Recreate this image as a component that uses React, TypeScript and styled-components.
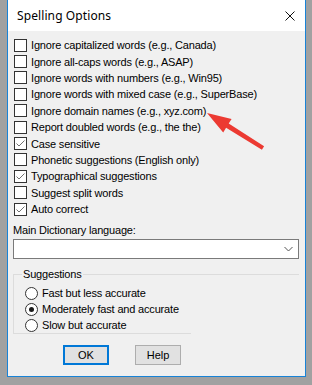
import React from 'react';
import styled, { createGlobalStyle } from 'styled-components';

const GlobalStyle = createGlobalStyle`
  html, body {
    margin: 0;
    padding: 0;
  }
  body {
    background: #a1a1a1;
    overflow: hidden;
  }
`;

const Screen = styled.div`
  position: relative;
  width: 312px;
  height: 385px;
  padding-left: 7px;
  box-sizing: border-box;
  background: #a1a1a1;
`;

const Dialog = styled.div`
  width: 299px;
  height: 377px;
  box-sizing: border-box;
  border: 1px solid #1883d7;
  border-top: none;
  background: #f0f0f0;
  display: flex;
  flex-direction: column;
  font-family: 'Liberation Sans', Arial, sans-serif;
  font-size: 11px;
  letter-spacing: -0.18px;
  color: #000;
`;

const TitleBar = styled.div`
  height: 31px;
  flex: none;
  background: #fff;
  display: flex;
  align-items: center;
  justify-content: space-between;
  padding: 0 10px 0 9px;
  font-family: 'Noto Sans', sans-serif;
  font-size: 12px;
  letter-spacing: 0.1px;
`;

const Body = styled.div`
  display: flex;
  flex-direction: column;
  padding: 6px 6px 0 5px;
`;

const OptionList = styled.div`
  display: flex;
  flex-direction: column;
  padding-left: 1px;
`;

const Row = styled.label<{ $h: number }>`
  display: flex;
  align-items: center;
  gap: 4px;
  height: ${(p) => p.$h}px;
  white-space: nowrap;
`;

const Box = styled.span`
  width: 13px;
  height: 13px;
  box-sizing: border-box;
  border: 1px solid #333;
  background: #fff;
  flex: none;
  display: flex;
  align-items: center;
  justify-content: center;
`;

const Radio = styled.span<{ $on?: boolean }>`
  width: 13px;
  height: 13px;
  box-sizing: border-box;
  border: 1px solid #333;
  border-radius: 50%;
  background: #fff;
  flex: none;
  display: flex;
  align-items: center;
  justify-content: center;
  &::after {
    content: '';
    width: 5px;
    height: 5px;
    border-radius: 50%;
    background: ${(p) => (p.$on ? '#1a1a1a' : 'transparent')};
  }
`;

const FieldLabel = styled.div`
  margin-top: 7px;
  line-height: 13px;
`;

const Select = styled.div`
  margin-top: 2px;
  width: 286px;
  height: 20px;
  box-sizing: border-box;
  border: 1px solid #7a7a7a;
  background: #fff;
  display: flex;
  align-items: center;
  justify-content: flex-end;
  padding-right: 5px;
`;

const Group = styled.fieldset`
  margin: 9px 0 0 0;
  padding: 0;
  width: 286px;
  box-sizing: border-box;
  border: 1px solid #dcdcdc;
  border-right: none;
  border-bottom: none;
  min-width: 0;
`;

const Legend = styled.legend`
  margin-left: 8px;
  padding: 0 1px;
  line-height: 13px;
`;

const RadioList = styled.div`
  display: flex;
  flex-direction: column;
  padding: 4px 0 0 11px;
`;

const GroupFoot = styled.div`
  width: 178px;
  height: 1px;
  background: #dcdcdc;
`;

const Buttons = styled.div`
  display: flex;
  gap: 26px;
  margin: 11px 0 0 50px;
`;

const Button = styled.button<{ $primary?: boolean }>`
  width: 46px;
  height: 20px;
  box-sizing: border-box;
  padding: 0;
  background: #e1e1e1;
  border: ${(p) => (p.$primary ? '2px solid #0078d7' : '1px solid #adadad')};
  font-family: 'Liberation Sans', Arial, sans-serif;
  font-size: 11px;
  color: #000;
`;

const Overlay = styled.svg`
  position: absolute;
  left: 0;
  top: 0;
  pointer-events: none;
`;

const options: [string, boolean][] = [
  ['Ignore capitalized words (e.g., Canada)', false],
  ['Ignore all-caps words (e.g., ASAP)', false],
  ['Ignore words with numbers (e.g., Win95)', false],
  ['Ignore words with mixed case (e.g., SuperBase)', false],
  ['Ignore domain names (e.g., xyz.com)', false],
  ['Report doubled words (e.g., the the)', false],
  ['Case sensitive', true],
  ['Phonetic suggestions (English only)', false],
  ['Typographical suggestions', true],
  ['Suggest split words', false],
  ['Auto correct', true],
];

const speeds = [
  'Fast but less accurate',
  'Moderately fast and accurate',
  'Slow but accurate',
];

const Check = () => (
  <svg width="11" height="11" viewBox="0 0 11 11">
    <path d="M1.5 5.5 L4 8 L9.5 2.5" fill="none" stroke="#707070" strokeWidth="1" />
  </svg>
);

const App = () => {
  return (
    <Screen>
      <GlobalStyle />
      <Dialog>
        <TitleBar>
          <span>Spelling Options</span>
          <svg width="10" height="10" viewBox="0 0 10 10">
            <path d="M0.5 0.5 L9.5 9.5 M9.5 0.5 L0.5 9.5" stroke="#111" strokeWidth="1" />
          </svg>
        </TitleBar>
        <Body>
          <OptionList>
            {options.map(([text, on]) => (
              <Row key={text} $h={16.4}>
                <Box>{on && <Check />}</Box>
                {text}
              </Row>
            ))}
          </OptionList>
          <FieldLabel>Main Dictionary language:</FieldLabel>
          <Select>
            <svg width="9" height="6" viewBox="0 0 9 6">
              <path d="M0.5 1 L4.5 5 L8.5 1" fill="none" stroke="#555" strokeWidth="1" />
            </svg>
          </Select>
          <Group>
            <Legend>Suggestions</Legend>
            <RadioList>
              {speeds.map((s, i) => (
                <Row key={s} $h={16}>
                  <Radio $on={i === 1} />
                  {s}
                </Row>
              ))}
            </RadioList>
          </Group>
          <GroupFoot />
          <Buttons>
            <Button $primary>OK</Button>
            <Button>Help</Button>
          </Buttons>
        </Body>
      </Dialog>
      <Overlay width="312" height="385" viewBox="0 0 312 385">
        <polygon
          points="207,113 231.6,118.9 228.7,123.6 264.1,146.3 261.9,149.7 226.1,127.8 223.2,132.5"
          fill="#ec3a32"
        />
      </Overlay>
    </Screen>
  );
};

export default App;
